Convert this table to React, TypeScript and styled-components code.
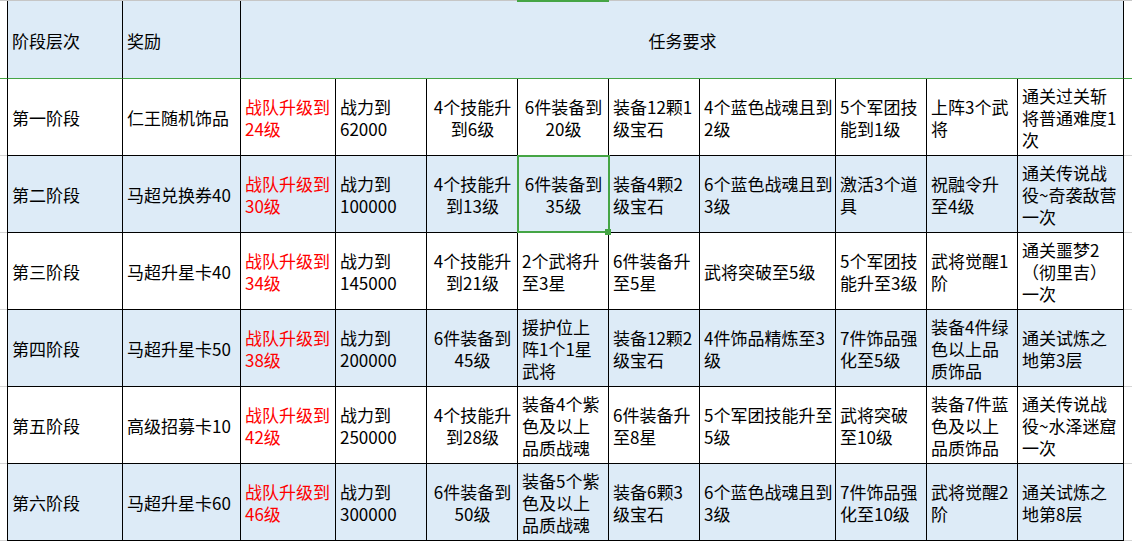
import React from "react";
import styled, { createGlobalStyle } from "styled-components";

const BLUE = "#DDEBF7";
const GRID = "#D4D4D4";
const GREEN = "#45A545";

interface StageRow {
  stage: string;
  reward: string;
  team: string;
  tasks: string[];
  center: number[];
}

const rows: StageRow[] = [
  {
    stage: "第一阶段",
    reward: "仁王随机饰品",
    team: "战队升级到\n24级",
    tasks: [
      "战力到\n62000",
      "4个技能升\n到6级",
      "6件装备到\n20级",
      "装备12颗1\n级宝石",
      "4个蓝色战魂且到\n2级",
      "5个军团技\n能到1级",
      "上阵3个武\n将",
      "通关过关斩\n将普通难度1\n次",
    ],
    center: [1, 2],
  },
  {
    stage: "第二阶段",
    reward: "马超兑换券40",
    team: "战队升级到\n30级",
    tasks: [
      "战力到\n100000",
      "4个技能升\n到13级",
      "6件装备到\n35级",
      "装备4颗2\n级宝石",
      "6个蓝色战魂且到\n3级",
      "激活3个道\n具",
      "祝融令升\n至4级",
      "通关传说战\n役~奇袭敌营\n一次",
    ],
    center: [1, 2],
  },
  {
    stage: "第三阶段",
    reward: "马超升星卡40",
    team: "战队升级到\n34级",
    tasks: [
      "战力到\n145000",
      "4个技能升\n到21级",
      "2个武将升\n至3星",
      "6件装备升\n至5星",
      "武将突破至5级",
      "5个军团技\n能升至3级",
      "武将觉醒1\n阶",
      "通关噩梦2\n（彻里吉）\n一次",
    ],
    center: [1],
  },
  {
    stage: "第四阶段",
    reward: "马超升星卡50",
    team: "战队升级到\n38级",
    tasks: [
      "战力到\n200000",
      "6件装备到\n45级",
      "援护位上\n阵1个1星\n武将",
      "装备12颗2\n级宝石",
      "4件饰品精炼至3\n级",
      "7件饰品强\n化至5级",
      "装备4件绿\n色以上品\n质饰品",
      "通关试炼之\n地第3层",
    ],
    center: [1],
  },
  {
    stage: "第五阶段",
    reward: "高级招募卡10",
    team: "战队升级到\n42级",
    tasks: [
      "战力到\n250000",
      "4个技能升\n到28级",
      "装备4个紫\n色及以上\n品质战魂",
      "6件装备升\n至8星",
      "5个军团技能升至\n5级",
      "武将突破\n至10级",
      "装备7件蓝\n色及以上\n品质饰品",
      "通关传说战\n役~水泽迷窟\n一次",
    ],
    center: [1],
  },
  {
    stage: "第六阶段",
    reward: "马超升星卡60",
    team: "战队升级到\n46级",
    tasks: [
      "战力到\n300000",
      "6件装备到\n50级",
      "装备5个紫\n色及以上\n品质战魂",
      "装备6颗3\n级宝石",
      "6个蓝色战魂且到\n3级",
      "7件饰品强\n化至10级",
      "武将觉醒2\n阶",
      "通关试炼之\n地第8层",
    ],
    center: [1],
  },
];

const GlobalStyle = createGlobalStyle`
  html, body {
    margin: 0;
    padding: 0;
    background: #ffffff;
  }
  body {
    font-family: "Noto Sans CJK SC", "Noto Sans", sans-serif;
    font-size: 17px;
    color: #000000;
  }
`;

const Sheet = styled.div`
  position: relative;
  width: 1132px;
  height: 541px;
  overflow: hidden;
  background: #ffffff;
`;

const TopEdge = styled.div`
  height: 1px;
  background: #c6c6c6;
`;

const ColumnMark = styled.div`
  position: absolute;
  top: 0;
  left: 517px;
  width: 92px;
  height: 2px;
  background: ${GREEN};
  z-index: 2;
`;

const Row = styled.div<{ $header?: boolean }>`
  display: grid;
  grid-template-columns: 7px 116px 118px 95px 91px 91px 91px 91px 136px 91px 91px 106px 1fr;
  height: ${({ $header }) => ($header ? "78px" : "77px")};
`;

const Margin = styled.div<{ $header?: boolean }>`
  border-bottom: 1px solid ${({ $header }) => ($header ? GREEN : GRID)};
`;

const Cell = styled.div<{
  $blue?: boolean;
  $first?: boolean;
  $center?: boolean;
  $header?: boolean;
  $span?: number;
  $selected?: boolean;
}>`
  box-sizing: border-box;
  position: ${({ $selected }) => ($selected ? "relative" : "static")};
  display: flex;
  flex-direction: column;
  justify-content: center;
  align-items: ${({ $center }) => ($center ? "center" : "flex-start")};
  padding: 2px 3px 0 4px;
  background: ${({ $blue }) => ($blue ? BLUE : "#ffffff")};
  border-right: 1px solid #000000;
  border-bottom: 1px solid ${({ $header }) => ($header ? GREEN : "#000000")};
  border-left: ${({ $first }) => ($first ? "1px solid #000000" : "none")};
  grid-column: ${({ $span }) => ($span ? `span ${$span}` : "auto")};
  overflow: visible;
`;

const Text = styled.div<{ $red?: boolean; $center?: boolean }>`
  line-height: 22px;
  white-space: nowrap;
  color: ${({ $red }) => ($red ? "#ff0000" : "#000000")};
  text-align: ${({ $center }) => ($center ? "center" : "left")};
`;

const Selection = styled.div`
  position: absolute;
  left: -1px;
  top: -1px;
  width: 93px;
  height: 78px;
  box-sizing: border-box;
  border: 2px solid ${GREEN};
  pointer-events: none;
  z-index: 1;
`;

const Handle = styled.div`
  position: absolute;
  left: 87px;
  top: 73px;
  width: 6px;
  height: 6px;
  background: ${GREEN};
  z-index: 2;
`;

const Lines: React.FC<{ value: string; red?: boolean; center?: boolean }> = ({
  value,
  red,
  center,
}) => {
  const parts = value.split("\n");
  return (
    <Text $red={red} $center={center}>
      {parts.map((p, i) => (
        <React.Fragment key={i}>
          {p}
          {i < parts.length - 1 && <br />}
        </React.Fragment>
      ))}
    </Text>
  );
};

export default function App() {
  return (
    <>
      <GlobalStyle />
      <Sheet>
        <TopEdge />
        <ColumnMark />
        <Row $header>
          <Margin $header />
          <Cell $blue $first $header>
            <Lines value="阶段层次" />
          </Cell>
          <Cell $blue $header>
            <Lines value="奖励" />
          </Cell>
          <Cell $blue $header $span={9} $center>
            <Lines value="任务要求" />
          </Cell>
          <Margin $header />
        </Row>
        {rows.map((r, ri) => {
          const blue = ri % 2 === 1;
          return (
            <Row key={r.stage}>
              <Margin />
              <Cell $blue={blue} $first>
                <Lines value={r.stage} />
              </Cell>
              <Cell $blue={blue}>
                <Lines value={r.reward} />
              </Cell>
              <Cell $blue={blue}>
                <Lines value={r.team} red />
              </Cell>
              {r.tasks.map((t, ti) => {
                const center = r.center.includes(ti);
                const selected = ri === 1 && ti === 2;
                return (
                  <Cell key={ti} $blue={blue} $center={center} $selected={selected}>
                    <Lines value={t} center={center} />
                    {selected && (
                      <>
                        <Selection />
                        <Handle />
                      </>
                    )}
                  </Cell>
                );
              })}
              <Margin />
            </Row>
          );
        })}
      </Sheet>
    </>
  );
}
